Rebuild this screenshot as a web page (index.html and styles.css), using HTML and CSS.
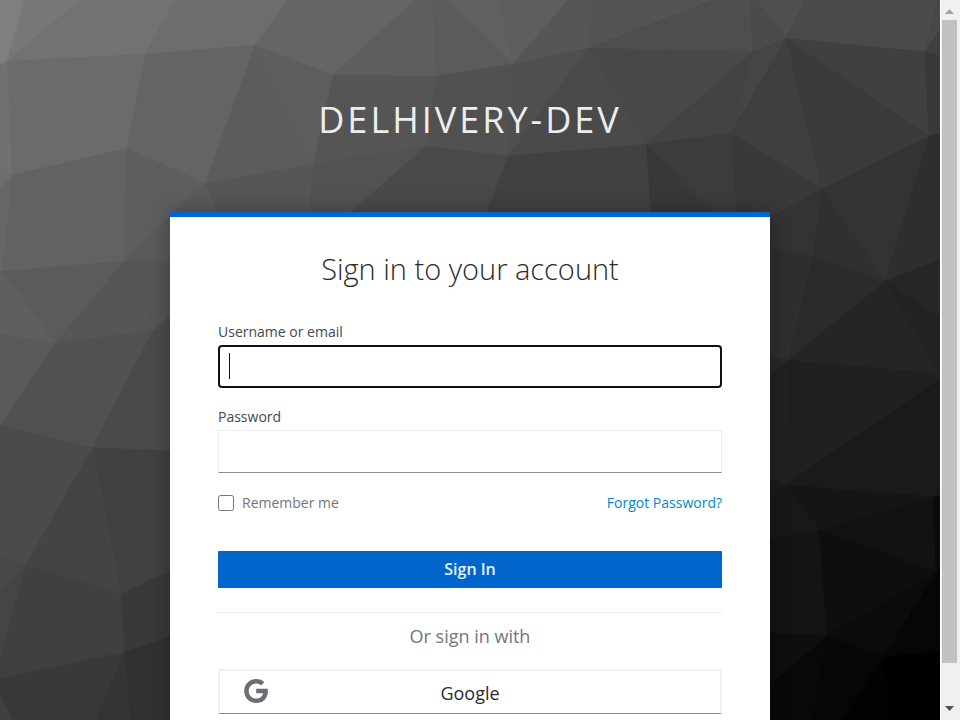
FILE: index.html
```html
<!DOCTYPE html>
<html lang="en">
<head>
<meta charset="utf-8">
<title>Sign in to DELHIVERY-DEV</title>
<link rel="stylesheet" href="styles.css">
</head>
<body>
<div class="page">
  <svg class="backdrop" viewBox="0 0 940 720" preserveAspectRatio="xMidYMid slice" aria-hidden="true">
    <g>
      <path fill="#7f7f7f" d="M0 0H25L7 61 0 64z"/>
      <path fill="#777" d="M25 0H80L7 61z"/>
      <path fill="#727272" d="M80 0H175L145 54 7 61z"/>
      <path fill="#6d6d6d" d="M175 0H288L255 45 145 54z"/>
      <path fill="#656565" d="M288 0H415L333 75 255 45z"/>
      <path fill="#5e5e5e" d="M415 0H433L436 76 333 75z"/>
      <path fill="#5b5b5b" d="M433 0H447L513 64 436 76z"/>
      <path fill="#606060" d="M447 0H500L513 64z"/>
      <path fill="#5e5e5e" d="M500 0H568L513 64z"/>
      <path fill="#565656" d="M568 0H593L588 48 513 64z"/>
      <path fill="#545454" d="M593 0H713L588 48z"/>
      <path fill="#4e4e4e" d="M713 0H750L753 52 588 48z"/>
      <path fill="#4b4b4b" d="M750 0H757L786 38 753 52z"/>
      <path fill="#4f4f4f" d="M757 0H805L786 38z"/>
      <path fill="#4a4a4a" d="M805 0H882L925 52 786 38z"/>
      <path fill="#4b4b4b" d="M882 0H938L925 52z"/>
      <path fill="#484848" d="M938 0H940V30L925 52z"/>
      <path fill="#404040" d="M925 52L940 30V56z"/>
      <path fill="#717171" d="M0 64L7 61 12 175 0 166z"/>
      <path fill="#6e6e6e" d="M0 166L12 175 0 188z"/>
      <path fill="#6b6b6b" d="M7 61L145 54 127 148 12 175z"/>
      <path fill="#646464" d="M145 54L255 45 205 183 127 148z"/>
      <path fill="#5c5c5c" d="M255 45L313 164 205 183z"/>
      <path fill="#5e5e5e" d="M255 45L333 75 313 164z"/>
      <path fill="#555" d="M333 75L436 76 426 146 313 164z"/>
      <path fill="#515151" d="M436 76L513 64 508 156 426 146z"/>
      <path fill="#4f4f4f" d="M513 64L588 48 508 156z"/>
      <path fill="#4a4a4a" d="M588 48L646 144 508 156z"/>
      <path fill="#484848" d="M588 48L753 52 646 144z"/>
      <path fill="#434343" d="M753 52L731 133 646 144z"/>
      <path fill="#454545" d="M753 52L786 38 731 133z"/>
      <path fill="#3f3f3f" d="M786 38L822 189 731 133z"/>
      <path fill="#3b3b3b" d="M786 38L929 136 822 189z"/>
      <path fill="#404040" d="M786 38L925 52 929 136z"/>
      <path fill="#383838" d="M925 52L940 56V134L929 136z"/>
      <path fill="#676767" d="M0 188L12 175 2 271H0z"/>
      <path fill="#626262" d="M12 175L127 148 124 261 2 271z"/>
      <path fill="#5e5e5e" d="M127 148L205 183 124 261z"/>
      <path fill="#5a5a5a" d="M205 183L240 261H124z"/>
      <path fill="#565656" d="M205 183L313 164 308 230H225z"/>
      <path fill="#525252" d="M313 164L426 146 330 230H308z"/>
      <path fill="#494949" d="M426 146L508 156 480 230H330z"/>
      <path fill="#414141" d="M508 156L646 144 652 230H480z"/>
      <path fill="#383838" d="M646 144L730 230H652z"/>
      <path fill="#3c3c3c" d="M646 144L731 133 738 230H730z"/>
      <path fill="#393939" d="M731 133L822 189 745 233H738z"/>
      <path fill="#333" d="M822 189L813 257 740 240V233z"/>
      <path fill="#303030" d="M822 189L885 281 813 257z"/>
      <path fill="#333" d="M822 189L929 136 885 281z"/>
      <path fill="#2e2e2e" d="M929 136L940 134V260L885 281z"/>
      <path fill="#262626" d="M885 281L940 260V318z"/>
      <path fill="#222" d="M885 281L940 318V374z"/>
      <path fill="#252525" d="M885 281L940 374 788 360z"/>
      <path fill="#2b2b2b" d="M813 257L885 281 788 360z"/>
      <path fill="#2e2e2e" d="M813 257L788 360 740 350V240z"/>
      <path fill="#292929" d="M788 360L740 400V350z"/>
      <path fill="#202020" d="M788 360L940 374V379L785 485z"/>
      <path fill="#222" d="M788 360L785 485 740 465V400z"/>
      <path fill="#1c1c1c" d="M785 485L740 520V465z"/>
      <path fill="#1a1a1a" d="M785 485L940 379V496L933 497z"/>
      <path fill="#151515" d="M785 485L933 497 819 530z"/>
      <path fill="#121212" d="M933 497L936 572 819 530z"/>
      <path fill="#0b0b0b" d="M933 497L940 495V568L936 572z"/>
      <path fill="#181818" d="M785 485L819 530 740 544V520z"/>
      <path fill="#141414" d="M819 530L827 636 740 631V544z"/>
      <path fill="#0e0e0e" d="M819 530L936 572 827 636z"/>
      <path fill="#0b0b0b" d="M936 572L883 657 827 636z"/>
      <path fill="#060606" d="M936 572L940 568V651L883 657z"/>
      <path fill="#000" d="M883 657L940 651V720H890z"/>
      <path fill="#020202" d="M883 657L890 720H842z"/>
      <path fill="#060606" d="M827 636L883 657 842 720H812z"/>
      <path fill="#080808" d="M827 636L812 720H740V710z"/>
      <path fill="#0e0e0e" d="M827 636L740 710V631z"/>
      <path fill="#5b5b5b" d="M2 271L124 261 55 343z"/>
      <path fill="#5f5f5f" d="M0 271H2L55 343 0 334z"/>
      <path fill="#5a5a5a" d="M0 334L55 343 0 425z"/>
      <path fill="#565656" d="M124 261L153 330 55 343z"/>
      <path fill="#555" d="M124 261H200V290L153 330z"/>
      <path fill="#4c4c4c" d="M153 330L200 290V327z"/>
      <path fill="#515151" d="M55 343L153 330 92 447 0 425z"/>
      <path fill="#4a4a4a" d="M153 330L200 327V452L92 447z"/>
      <path fill="#4b4b4b" d="M0 425L92 447 26 564 0 557z"/>
      <path fill="#444" d="M92 447L121 594 26 564z"/>
      <path fill="#414141" d="M92 447L200 452V556L121 594z"/>
      <path fill="#484848" d="M0 557L26 564 0 590z"/>
      <path fill="#454545" d="M26 564L0 655V590z"/>
      <path fill="#404040" d="M26 564L121 594 124 652 0 678V655z"/>
      <path fill="#393939" d="M121 594L200 556V626L124 652z"/>
      <path fill="#393939" d="M124 652L95 720H12L0 695V678z"/>
      <path fill="#404040" d="M0 695L12 720H0z"/>
      <path fill="#343434" d="M124 652L130 720H95z"/>
      <path fill="#313131" d="M124 652L200 626V720H130z"/>
    </g>
  </svg>
  <div class="login">
    <header class="realm">delhivery-dev</header>
    <main class="card">
      <h1 class="title">Sign in to your account</h1>
      <form class="form">
        <div class="field">
          <label for="username">Username or email</label>
          <div class="input-wrap">
            <input class="text-input" id="username" name="username" type="text" autofocus>
            <span class="caret" aria-hidden="true"></span>
          </div>
        </div>
        <div class="field">
          <label for="password">Password</label>
          <input class="text-input" id="password" name="password" type="password">
        </div>
        <div class="options">
          <label class="remember" for="remember"><input id="remember" name="remember" type="checkbox">Remember me</label>
          <a class="forgot" href="#">Forgot Password?</a>
        </div>
        <button class="submit" type="submit">Sign In</button>
      </form>
      <section class="social">
        <h2 class="social-title">Or sign in with</h2>
        <a class="provider" href="#">
          <svg class="provider-icon" viewBox="0 0 24 24" aria-hidden="true"><path fill="#6a6e73" d="M12.2 9.800H23.700C23.800 10.600 23.900 11.400 23.900 12.200C23.900 19.200 19.200 24 12.200 24C5.500 24 .2 18.700 .2 12S5.500 0 12.200 0C15.500 0 18.200 1.200 20.300 3.200L17 6.400C12.700 2.200 4.700 5.300 4.700 12C4.700 16.200 8 19.600 12.200 19.600C17 19.600 18.800 16.200 19.100 14.200H12.200z"/></svg>
          <span>Google</span>
        </a>
      </section>
    </main>
  </div>
</div>
<div class="scrollbar" aria-hidden="true">
  <svg class="arrow" viewBox="0 0 9 5"><path fill="#a3a3a3" d="M0 5L4.500 0 9 5z"/></svg>
  <div class="thumb"></div>
  <svg class="arrow" viewBox="0 0 9 5"><path fill="#505050" d="M0 0H9L4.500 5z"/></svg>
</div>
</body>
</html>
```

FILE: styles.css
```css
* {
  box-sizing: border-box;
}

body {
  margin: 0;
  height: 100vh;
  display: flex;
  overflow: hidden;
  font-family: "Open Sans", sans-serif;
  font-size: 14px;
  color: #45494d;
  background: #f0f0f0;
}

.page {
  position: relative;
  flex: 1;
  min-width: 0;
  overflow: hidden;
  background: linear-gradient(135deg, #7a7a7a, #444 50%, #000);
}

.backdrop {
  position: absolute;
  inset: 0;
  width: 100%;
  height: 100%;
}

.login {
  position: relative;
}

.realm {
  padding: 93px 20px 65px;
  font-size: 36px;
  line-height: 54px;
  letter-spacing: 3px;
  text-align: center;
  text-transform: uppercase;
  color: #ededed;
}

.card {
  max-width: 600px;
  margin: 0 auto;
  padding: 32px 48px 48px;
  border-top: 5px solid #06c;
  background: #fff;
  box-shadow: 0 0 20px rgba(0, 0, 0, 0.3);
}

.title {
  margin: 0 0 32px;
  font-size: 29px;
  font-weight: 300;
  line-height: 40px;
  text-align: center;
  color: #2b2b2b;
}

.form {
  display: flex;
  flex-direction: column;
}

.field {
  display: flex;
  flex-direction: column;
  margin-bottom: 18px;
}

.field label {
  line-height: 22px;
  margin-bottom: 2px;
}

.input-wrap {
  position: relative;
  display: flex;
}

.caret {
  position: absolute;
  top: 8px;
  left: 11px;
  width: 1px;
  height: 26px;
  background: #151515;
}

.text-input {
  width: 100%;
  height: 43px;
  padding: 6px 10px;
  border: 1px solid #ededed;
  border-bottom-color: #8a8d90;
  background: #fff;
  font: inherit;
  font-size: 20px;
  color: #151515;
}

.text-input:focus {
  border: 2px solid #101010;
  border-radius: 4px;
  outline: 0;
  caret-color: transparent;
}

.options {
  display: flex;
  justify-content: space-between;
  margin-top: 2px;
  line-height: 20px;
}

.remember {
  display: flex;
  align-items: center;
  gap: 8px;
  color: #72767b;
}

.remember input {
  width: 16px;
  height: 16px;
  margin: 0;
}

.forgot {
  color: #0088ce;
  text-decoration: none;
}

.submit {
  height: 37px;
  margin-top: 38px;
  padding: 0 0 2px;
  border: 0;
  border-radius: 1px;
  background: #06c;
  font: inherit;
  font-size: 16px;
  font-weight: 600;
  color: #e6f0fa;
}

.social {
  margin-top: 24px;
  border-top: 1px solid #ededed;
}

.social-title {
  margin: 8px 0 18px;
  font-size: 18px;
  font-weight: 400;
  line-height: 30px;
  text-align: center;
  color: #72767b;
}

.provider {
  display: grid;
  grid-template-columns: 24px 1fr 24px;
  align-items: center;
  height: 45px;
  padding: 0 24px;
  border: 2px solid #f0f0f0;
  border-bottom: 1px solid #8a8d90;
  font-size: 18px;
  text-align: center;
  text-decoration: none;
  color: #2b2b2b;
}

.provider span {
  padding-top: 2px;
}

.provider-icon {
  width: 24px;
  height: 24px;
  margin-bottom: 2px;
}

.scrollbar {
  width: 20px;
  display: flex;
  flex-direction: column;
  align-items: center;
  justify-content: space-between;
  padding: 9px 3px 9px 1px;
  background: #f0f0f0;
  border-left: 1px solid #fff;
}

.arrow {
  width: 9px;
  height: 5px;
}

.thumb {
  width: 15px;
  flex: 1;
  margin: 6px 0 43px;
  background: #c1c1c1;
}
```
